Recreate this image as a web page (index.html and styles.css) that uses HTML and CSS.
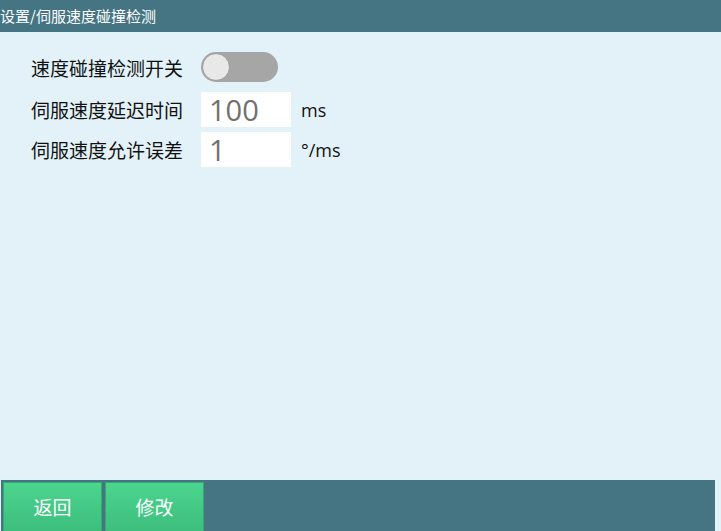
FILE: index.html
```html
<!DOCTYPE html>
<html lang="zh-CN">
<head>
    <meta charset="UTF-8">
    <meta name="viewport" content="width=device-width, initial-scale=1.0">
    <title>伺服速度碰撞检测</title>
    <link rel="stylesheet" href="styles.css">
</head>
<body>
    <div class="title-bar">设置/伺服速度碰撞检测</div>

    <div class="content">
        <div class="row switch-row">
            <span class="label">速度碰撞检测开关</span>
            <div class="switch" id="collisionSwitch"><span class="knob"></span></div>
        </div>
        <div class="row">
            <span class="label">伺服速度延迟时间</span>
            <input class="value" type="text" value="100">
            <span class="unit">ms</span>
        </div>
        <div class="row">
            <span class="label">伺服速度允许误差</span>
            <input class="value" type="text" value="1">
            <span class="unit">°/ms</span>
        </div>
    </div>

    <div class="bottom-bar">
        <button class="btn">返回</button>
        <button class="btn">修改</button>
    </div>

    <script>
        document.getElementById('collisionSwitch').addEventListener('click', function () {
            this.classList.toggle('on');
        });
    </script>
</body>
</html>
```

FILE: styles.css
```css
html, body {
    height: 100%;
}
body {
    margin: 0;
    display: flex;
    flex-direction: column;
    background-color: #e3f2f8;
    font-family: "Noto Sans CJK SC", "Noto Sans", sans-serif;
    overflow: hidden;
}
.title-bar {
    height: 32px;
    background-color: #457482;
    color: #ffffff;
    font-size: 15px;
    line-height: 32px;
    white-space: nowrap;
}
.content {
    flex: 1;
    padding: 20px 0 0 31px;
    display: flex;
    flex-direction: column;
    gap: 5px;
}
.row {
    display: flex;
    align-items: center;
    height: 35px;
}
.switch-row {
    height: 30px;
    margin-bottom: 5px;
}
.label {
    width: 170px;
    font-size: 19px;
    color: #111111;
    white-space: nowrap;
}
.switch {
    width: 77px;
    height: 30px;
    box-sizing: border-box;
    border-radius: 15px;
    background-color: #a6a6a6;
    padding: 1px;
    cursor: pointer;
}
.knob {
    display: block;
    width: 28px;
    height: 28px;
    box-sizing: border-box;
    border-radius: 50%;
    background-color: #e8e8e8;
    border: 1px solid #9a9a9a;
}
.switch.on {
    background-color: #45cf8a;
}
.switch.on .knob {
    margin-left: auto;
}
.value {
    width: 90px;
    height: 35px;
    box-sizing: border-box;
    border: none;
    outline: none;
    background-color: #ffffff;
    padding: 0 0 0 8px;
    font-family: "Open Sans", "Noto Sans", sans-serif;
    font-size: 29px;
    color: #707070;
}
.unit {
    margin-left: 10px;
    font-family: "Open Sans", "Noto Sans", sans-serif;
    font-size: 18px;
    color: #111111;
}
.bottom-bar {
    height: 51px;
    margin: 0 6px 0 1px;
    background-color: #457482;
    display: flex;
    gap: 3px;
    padding: 2px 0 0 2px;
    box-sizing: border-box;
}
.btn {
    width: 99px;
    height: 52px;
    border: 1px solid #3aa874;
    border-radius: 0;
    background: linear-gradient(#4bd58e, #3dbd7d);
    color: #ffffff;
    font-family: "Noto Sans CJK SC", sans-serif;
    font-size: 19px;
    padding: 0 0 4px 0;
    cursor: pointer;
}
.btn:hover {
    background: linear-gradient(#43c683, #36ad72);
}
```
